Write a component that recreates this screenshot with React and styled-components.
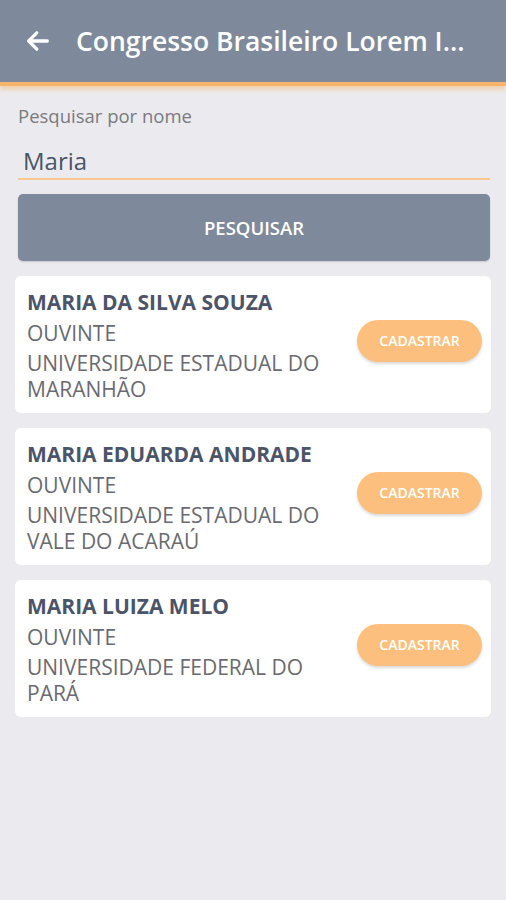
import React from 'react'
import styled, { createGlobalStyle } from 'styled-components'

const GlobalStyle = createGlobalStyle`
  html, body {
    margin: 0;
    padding: 0;
    background: #ebebef;
    font-family: "Open Sans", "Noto Sans", sans-serif;
  }
`

const Page = styled.div`
  min-height: 900px;
  background: #ebebef;
`

const Header = styled.header`
  height: 82px;
  background: #7e8a9b;
  display: flex;
  align-items: center;
  padding: 0 22px 0 24px;
  gap: 24px;
  border-bottom: 4px solid #f8b46a;
  box-shadow: 0 4px 4px rgba(248, 180, 106, 0.45);
`

const BackButton = styled.button`
  border: 0;
  background: none;
  padding: 0;
  display: flex;
  color: #fff;
  cursor: pointer;
`

const Title = styled.h1`
  margin: 0;
  color: #fff;
  font-size: 26.5px;
  font-weight: 600;
  white-space: nowrap;
`

const Content = styled.main`
  padding: 17px 15px 0 15px;
  display: flex;
  flex-direction: column;
`

const Label = styled.label`
  margin-left: 3px;
  color: #7a7a80;
  font-size: 18.5px;
`

const Input = styled.input`
  margin: 16px 1px 0 3px;
  border: 0;
  border-bottom: 2px solid #f9c88f;
  background: transparent;
  font-family: inherit;
  font-size: 24px;
  color: #4a5468;
  padding: 0 0 1px 5px;
  outline: none;
`

const SearchButton = styled.button`
  margin: 14px 1px 0 3px;
  height: 67px;
  border: 0;
  border-radius: 5px;
  background: #7e8a9b;
  color: #fff;
  font-family: inherit;
  font-size: 18.5px;
  font-weight: 600;
  box-shadow: 0 1px 2px rgba(0, 0, 0, 0.15);
`

const List = styled.div`
  margin-top: 15px;
  display: flex;
  flex-direction: column;
  gap: 15px;
`

const Card = styled.div`
  background: #fff;
  border-radius: 6px;
  height: 137px;
  box-sizing: border-box;
  padding: 12px 9px 0 12px;
  display: flex;
  align-items: flex-start;
  justify-content: space-between;
`

const Info = styled.div`
  display: flex;
  flex-direction: column;
  max-width: 320px;
`

const Name = styled.div`
  color: #4b5468;
  font-size: 21px;
  font-weight: 700;
  line-height: 28px;
`

const Line = styled.div`
  color: #6a6a70;
  font-size: 21px;
  line-height: 26px;
  margin-top: ${p => (p.$gap ? '4px' : '0')};
`

const RegisterButton = styled.button`
  align-self: center;
  margin-top: -20px;
  width: 125px;
  height: 42px;
  border: 0;
  border-radius: 21px;
  background: #fdbf7d;
  color: #fff;
  font-family: inherit;
  font-size: 14px;
  font-weight: 600;
  box-shadow: 0 2px 3px rgba(0, 0, 0, 0.15);
`

const people = [
  { name: 'MARIA DA SILVA SOUZA', role: 'OUVINTE', uni: ['UNIVERSIDADE ESTADUAL DO', 'MARANHÃO'] },
  { name: 'MARIA EDUARDA ANDRADE', role: 'OUVINTE', uni: ['UNIVERSIDADE ESTADUAL DO', 'VALE DO ACARAÚ'] },
  { name: 'MARIA LUIZA MELO', role: 'OUVINTE', uni: ['UNIVERSIDADE FEDERAL DO', 'PARÁ'] },
]

const ArrowLeft = () => (
  <svg width="28" height="28" viewBox="0 0 24 24" fill="none" stroke="currentColor" strokeWidth="2.8" strokeLinecap="round" strokeLinejoin="round">
    <path d="M20 12H5" />
    <path d="M11 5l-7 7 7 7" />
  </svg>
)

const App = () => {
  return (
    <Page>
      <GlobalStyle />
      <Header>
        <BackButton aria-label="Voltar"><ArrowLeft /></BackButton>
        <Title>Congresso Brasileiro Lorem I...</Title>
      </Header>
      <Content>
        <Label>Pesquisar por nome</Label>
        <Input defaultValue="Maria" />
        <SearchButton>PESQUISAR</SearchButton>
        <List>
          {people.map(p => (
            <Card key={p.name}>
              <Info>
                <Name>{p.name}</Name>
                <Line $gap>{p.role}</Line>
                <Line $gap>{p.uni[0]}</Line>
                <Line>{p.uni[1]}</Line>
              </Info>
              <RegisterButton>CADASTRAR</RegisterButton>
            </Card>
          ))}
        </List>
      </Content>
    </Page>
  )
}

export default App
